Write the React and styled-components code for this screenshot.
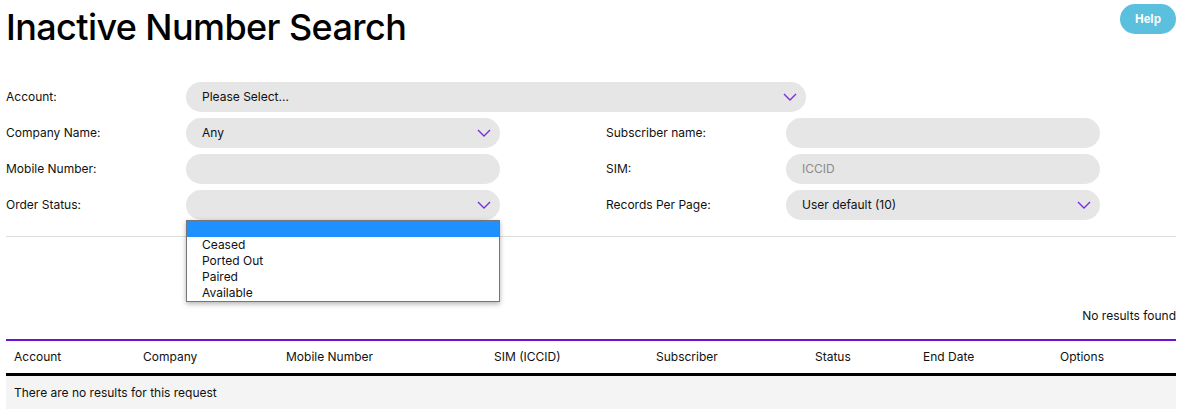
import React from 'react';
import styled, { createGlobalStyle } from 'styled-components';

const GlobalStyle = createGlobalStyle`
  body {
    margin: 0;
    background: #fff;
    font-family: Inter, "Noto Sans", sans-serif;
    color: #111;
  }
`;

const Page = styled.div`
  width: 1170px;
  padding: 0 6px;
`;

const Header = styled.div`
  display: flex;
  justify-content: space-between;
  align-items: flex-start;
  height: 82px;
`;

const Title = styled.h1`
  margin: 4px 0 0;
  font-size: 36px;
  font-weight: 500;
  letter-spacing: -0.6px;
  line-height: 46px;
  color: #000;
`;

const HelpButton = styled.button`
  margin-top: 4px;
  height: 30px;
  width: 56px;
  border: none;
  border-radius: 15px;
  background: #5bc0de;
  color: #fff;
  font-family: "Liberation Sans", Arial, sans-serif;
  font-weight: 700;
  font-size: 12px;
`;

const Form = styled.div`
  display: grid;
  grid-template-columns: 180px 314px 106px 180px 314px;
  grid-auto-rows: 30px;
  row-gap: 6px;
  align-items: center;
  padding-bottom: 16px;
  border-bottom: 1px solid #dedede;
`;

const Label = styled.div`
  font-size: 12px;
  line-height: 14px;
  padding-bottom: 1px;
  color: #111;
`;

const Field = styled.div`
  position: relative;
  box-sizing: border-box;
  width: ${(p) => p.$width || 314}px;
  height: 30px;
  border-radius: 15px;
  background: #e6e6e6;
  display: flex;
  align-items: center;
  justify-content: space-between;
  padding: 0 9px 1px 16px;
  font-size: 12px;
  color: ${(p) => (p.$placeholder ? '#8a8a8a' : '#111')};
  grid-column: ${(p) => p.$span || 'auto'};
`;

const Chevron = () => (
  <svg width="14" height="8" viewBox="0 0 14 8">
    <polyline points="1,1 7,7 13,1" fill="none" stroke="#7a2ed8" strokeWidth="1.4" />
  </svg>
);

const Options = styled.ul`
  position: absolute;
  top: 30px;
  left: 0;
  width: 314px;
  box-sizing: border-box;
  margin: 0;
  padding: 0;
  list-style: none;
  background: #fff;
  border: 1px solid #767676;
  box-shadow: 0 2px 5px rgba(0, 0, 0, 0.3);
  z-index: 5;
`;

const Option = styled.li`
  height: 16px;
  line-height: 16px;
  padding-left: 15px;
  font-size: 12px;
  color: #111;
  background: ${(p) => (p.$active ? '#1e90ff' : 'transparent')};
`;

const Summary = styled.div`
  text-align: right;
  font-size: 12px;
  margin-top: 71px;
  height: 31px;
  border-bottom: 2px solid #6f0fd8;
`;

const Table = styled.table`
  width: 1170px;
  border-collapse: collapse;
  table-layout: fixed;
`;

const Th = styled.th`
  box-sizing: border-box;
  width: ${(p) => p.$w}px;
  text-align: left;
  font-weight: 400;
  font-size: 12px;
  color: #111;
  height: 33px;
  padding: 0 8px;
  border-bottom: 3px solid #000;
`;

const Td = styled.td`
  background: #f4f4f4;
  height: 33px;
  padding: 0 8px;
  font-size: 12px;
  color: #111;
`;

const columns = [
  ['Account', 129],
  ['Company', 143],
  ['Mobile Number', 208],
  ['SIM (ICCID)', 162],
  ['Subscriber', 159],
  ['Status', 108],
  ['End Date', 137],
  ['Options', 124],
];

export default function App() {
  return (
    <Page>
      <GlobalStyle />
      <Header>
        <Title>Inactive Number Search</Title>
        <HelpButton>Help</HelpButton>
      </Header>
      <Form>
        <Label>Account:</Label>
        <Field $span="2 / 5" $width={620}>
          Please Select... <Chevron />
        </Field>
        <Label />

        <Label>Company Name:</Label>
        <Field>
          Any <Chevron />
        </Field>
        <div />
        <Label>Subscriber name:</Label>
        <Field />

        <Label>Mobile Number:</Label>
        <Field />
        <div />
        <Label>SIM:</Label>
        <Field $placeholder>ICCID</Field>

        <Label>Order Status:</Label>
        <Field>
          <span />
          <Chevron />
          <Options>
            <Option $active>&nbsp;</Option>
            <Option>Ceased</Option>
            <Option>Ported Out</Option>
            <Option>Paired</Option>
            <Option>Available</Option>
          </Options>
        </Field>
        <div />
        <Label>Records Per Page:</Label>
        <Field>
          User default (10) <Chevron />
        </Field>
      </Form>
      <Summary>No results found</Summary>
      <Table>
        <thead>
          <tr>
            {columns.map(([name, w]) => (
              <Th key={name} $w={w}>{name}</Th>
            ))}
          </tr>
        </thead>
        <tbody>
          <tr>
            <Td colSpan={8}>There are no results for this request</Td>
          </tr>
        </tbody>
      </Table>
    </Page>
  );
}
